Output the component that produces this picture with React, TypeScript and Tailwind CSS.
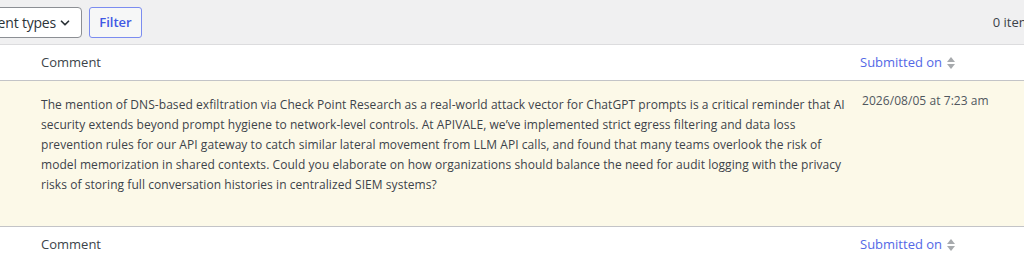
import { ChevronDown } from 'lucide-react';

const commentLines = [
  'The mention of DNS-based exfiltration via Check Point Research as a real-world attack vector for ChatGPT prompts is a critical reminder that AI',
  'security extends beyond prompt hygiene to network-level controls. At APIVALE, we\u2019ve implemented strict egress filtering and data loss',
  'prevention rules for our API gateway to catch similar lateral movement from LLM API calls, and found that many teams overlook the risk of',
  'model memorization in shared contexts. Could you elaborate on how organizations should balance the need for audit logging with the privacy',
  'risks of storing full conversation histories in centralized SIEM systems?',
];

function SortIcon() {
  return (
    <svg width="10" height="14" viewBox="0 0 10 14" className="ml-1 shrink-0">
      <path d="M1 6 L5 1 L9 6 Z" fill="#a7aaad" />
      <path d="M1 8 L5 13 L9 8 Z" fill="#a7aaad" />
    </svg>
  );
}

function HeaderRow() {
  return (
    <div className="flex items-center h-[35px] bg-white pt-px">
      <div className="flex-1 pl-[41px] text-[#3c434a]">Comment</div>
      <div className="w-[164px] flex items-center text-[#5468e6]">
        Submitted on
        <SortIcon />
      </div>
    </div>
  );
}

export default function App() {
  return (
    <div className="w-[1024px] h-[259px] overflow-hidden bg-[#f0f0f1] text-[13px] text-[#3c434a] font-['Open_Sans',sans-serif]">
      {/* Filters bar */}
      <div className="flex items-center h-[44px] pt-px">
        <div className="w-[82px] overflow-hidden flex justify-end">
          <div className="shrink-0 flex items-center h-[31px] bg-white border border-[#8c8f94] rounded-[4px] pl-2 pr-[9px] whitespace-nowrap text-[14px] text-[#2c3338] tracking-[-0.2px]">
            All comment types
            <ChevronDown className="w-3.5 h-3.5 ml-0.5" strokeWidth={3} />
          </div>
        </div>
        <button className="ml-[7px] h-[31px] w-[53px] border border-[#7b8cf0] rounded-[3px] text-[#4058e4] font-semibold text-[13px] bg-[#f6f7f7]">
          Filter
        </button>
        <div className="ml-auto mr-[-13px] whitespace-nowrap text-[#3c434a]">0 items</div>
      </div>

      {/* Table */}
      <div className="border-t border-[#dcdcde]">
        <HeaderRow />
        <div className="flex bg-[#fcf9e8] border-t border-[#c3c4c7] h-[146px] text-[12px] tracking-[0.06px]">
          <div className="flex-1 pl-[41px] pt-[14px] leading-[20px] whitespace-nowrap text-[#3c434a]">
            {commentLines.map((line, i) => (
              <div key={i}>{line}</div>
            ))}
          </div>
          <div className="w-[162px] pt-[10px] leading-[20px] text-[#50575e] whitespace-nowrap">
            2026/08/05 at 7:23 am
          </div>
        </div>
        <div className="border-t border-[#c3c4c7]">
          <HeaderRow />
        </div>
      </div>
    </div>
  );
}
